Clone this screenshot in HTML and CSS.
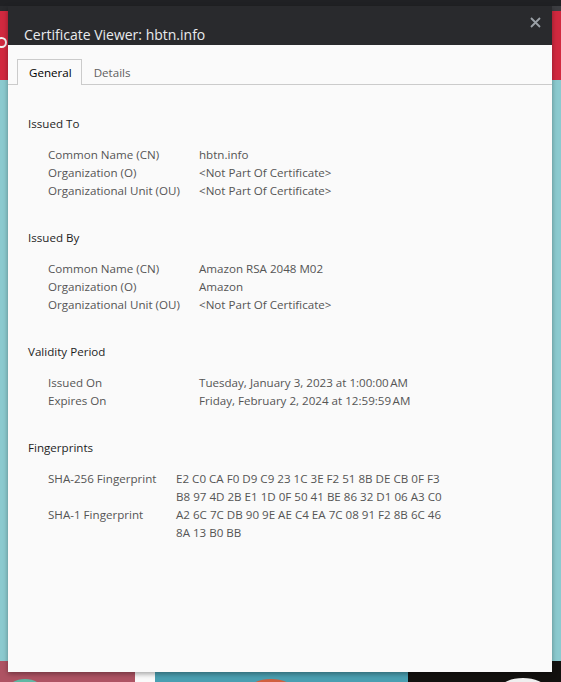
FILE: index.html
```html
<!DOCTYPE html>
<html>
<head>
<meta charset="utf-8">
<link rel="stylesheet" href="styles.css">
</head>
<body>
<div class="backdrop">
  <div class="bd-top"></div>
  <div class="bd-mid">
    <div class="bd-side">
      <div class="bd-dark"></div>
      <div class="bd-red"><span class="ring"></span></div>
      <div class="bd-teal"></div>
    </div>
    <div class="bd-center"></div>
    <div class="bd-side bd-right">
      <div class="bd-gray"></div>
      <div class="bd-red"></div>
      <div class="bd-teal"></div>
    </div>
  </div>
  <div class="bd-bottom">
    <div class="tile maroon"><span class="blob green"></span></div>
    <div class="tile gap"></div>
    <div class="tile cyan"><span class="blob orange"></span></div>
    <div class="tile black"><span class="blob white"></span></div>
  </div>
</div>

<div class="dialog">
  <div class="header">
    <div class="title">Certificate Viewer: hbtn.info</div>
    <svg class="close" width="11" height="11" viewBox="0 0 11 11"><path d="M1 1L10 10M10 1L1 10" stroke="#9aa0a6" stroke-width="1.8" fill="none"/></svg>
  </div>
  <div class="tabs">
    <div class="tab active">General</div>
    <div class="tab">Details</div>
  </div>
  <div class="content">
    <section class="sec">
      <div class="sec-title">Issued To</div>
      <div class="grid">
        <div class="lbl">Common Name (CN)</div><div class="val">hbtn.info</div>
        <div class="lbl">Organization (O)</div><div class="val">&lt;Not Part Of Certificate&gt;</div>
        <div class="lbl">Organizational Unit (OU)</div><div class="val">&lt;Not Part Of Certificate&gt;</div>
      </div>
    </section>
    <section class="sec">
      <div class="sec-title">Issued By</div>
      <div class="grid">
        <div class="lbl">Common Name (CN)</div><div class="val">Amazon RSA 2048 M02</div>
        <div class="lbl">Organization (O)</div><div class="val">Amazon</div>
        <div class="lbl">Organizational Unit (OU)</div><div class="val">&lt;Not Part Of Certificate&gt;</div>
      </div>
    </section>
    <section class="sec">
      <div class="sec-title">Validity Period</div>
      <div class="grid">
        <div class="lbl">Issued On</div><div class="val">Tuesday, January 3, 2023 at 1:00:00&#8239;AM</div>
        <div class="lbl">Expires On</div><div class="val">Friday, February 2, 2024 at 12:59:59&#8239;AM</div>
      </div>
    </section>
    <section class="sec">
      <div class="sec-title">Fingerprints</div>
      <div class="grid fp">
        <div class="lbl">SHA-256 Fingerprint</div><div class="val">E2 C0 CA F0 D9 C9 23 1C 3E F2 51 8B DE CB 0F F3<br>B8 97 4D 2B E1 1D 0F 50 41 BE 86 32 D1 06 A3 C0</div>
        <div class="lbl">SHA-1 Fingerprint</div><div class="val">A2 6C 7C DB 90 9E AE C4 EA 7C 08 91 F2 8B 6C 46<br>8A 13 B0 BB</div>
      </div>
    </section>
  </div>
</div>
</body>
</html>
```

FILE: styles.css
```css
* { box-sizing: border-box; }
html, body { margin: 0; padding: 0; }
body {
  width: 561px;
  height: 682px;
  overflow: hidden;
  position: relative;
  font-family: "Open Sans", "Noto Sans", sans-serif;
  background: #fafafa;
}

/* backdrop page */
.backdrop {
  width: 561px;
  height: 682px;
  display: flex;
  flex-direction: column;
}
.bd-top { height: 6px; background: #202124; }
.bd-mid { height: 655px; display: flex; }
.bd-side { width: 8px; display: flex; flex-direction: column; }
.bd-right { width: 9px; }
.bd-center { flex: 1; background: #fafafa; }
.bd-dark { height: 5px; background: #292a2d; }
.bd-gray { height: 5px; background: #3c3d41; }
.bd-red { height: 69px; background: #d1293f; position: relative; overflow: hidden; }
.bd-teal { flex: 1; background: #8bcacf; }
.ring {
  position: absolute;
  left: -4px;
  top: 26px;
  width: 11px;
  height: 11px;
  border: 2px solid #f4f4f4;
  border-radius: 50%;
}
.bd-bottom { height: 21px; display: flex; }
.tile { position: relative; overflow: hidden; }
.maroon { width: 135px; background: #ae5363; }
.gap { width: 20px; background: #fafafa; }
.cyan { width: 253px; background: #4a9fb1; }
.black { flex: 1; background: #13110f; }
.blob { position: absolute; border-radius: 50%; }
.green { left: 8px; top: 18px; width: 34px; height: 20px; background: #5fb7a3; }
.orange { left: 94px; top: 18px; width: 44px; height: 20px; background: #d0603f; }
.white { left: 93px; top: 17px; width: 44px; height: 20px; background: #efefef; }

/* dialog */
.dialog {
  position: absolute;
  left: 8px;
  top: 6px;
  width: 544px;
  height: 666px;
  background: #fafafa;
  box-shadow: 0 2px 5px rgba(0, 0, 0, 0.35);
  display: flex;
  flex-direction: column;
}
.header {
  height: 39px;
  background: #292a2d;
  display: flex;
  padding: 0 11px 0 16px;
}
.title {
  color: #e8eaed;
  font-size: 14px;
  line-height: 20px;
  padding-top: 19px;
  flex: 1;
}
.close { margin-top: 11px; }

.tabs {
  display: flex;
  padding: 14px 0 0 9px;
  border-bottom: 1px solid #cbcbcb;
  height: 40px;
}
.tab {
  font-size: 11.6px;
  color: #606060;
  padding: 0 11px;
  height: 26px;
  line-height: 26px;
  border: 1px solid transparent;
  border-bottom: none;
}
.tab.active {
  color: #000;
  border-color: #cbcbcb;
  background: #fafafa;
  margin-bottom: -1px;
  padding: 0 9px 0 11px;
}

.content {
  padding: 30px 20px 0 20px;
  display: flex;
  flex-direction: column;
  gap: 29px;
}
.sec-title {
  font-size: 11.6px;
  line-height: 18px;
  color: #1e1e1e;
  margin-bottom: 13px;
}
.grid {
  display: grid;
  grid-template-columns: 151px 1fr;
  padding-left: 20px;
  font-size: 11.6px;
  line-height: 18px;
  color: #555;
}
.grid.fp { grid-template-columns: 128px 1fr; }
```
